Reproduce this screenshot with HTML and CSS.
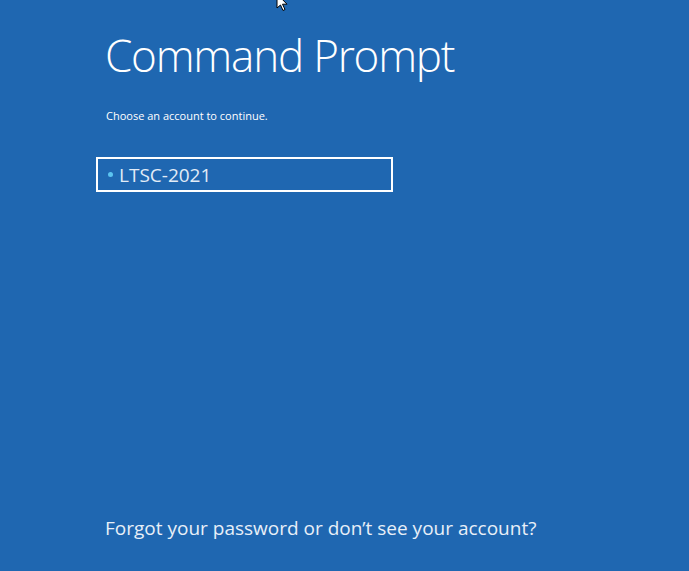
FILE: index.html
```html
<!DOCTYPE html>
<html lang="en">
<head>
  <meta charset="UTF-8">
  <title>Command Prompt</title>
  <link rel="stylesheet" href="styles.css">
</head>
<body>
  <div class="screen">
    <svg class="cursor" width="14" height="14" viewBox="0 0 14 14">
      <path d="M1 -6 L1 8 L4.5 5 L7 10.5 L9 9.5 L6.5 4.2 L11 4.2 Z" fill="#fff" stroke="#000" stroke-width="1"/>
    </svg>
    <div class="content">
      <h1 class="title">Command Prompt</h1>
      <p class="hint">Choose an account to continue.</p>
      <div class="account">
        <span class="dot"></span>
        <span class="name">LTSC-2021</span>
      </div>
    </div>
    <p class="forgot">Forgot your password or don’t see your account?</p>
  </div>
</body>
</html>
```
FILE: styles.css
```css
body {
  margin: 0;
  background: #1f67b1;
  color: #fff;
  font-family: 'Open Sans', sans-serif;
}
.screen {
  position: relative;
  height: 571px;
  display: flex;
  flex-direction: column;
  justify-content: space-between;
  padding: 0 0 0 105px;
  box-sizing: border-box;
  overflow: hidden;
}
.cursor {
  position: absolute;
  left: 276px;
  top: 0;
}
.title {
  margin: 27px 0 0 0;
  font-weight: 300;
  font-size: 44px;
  letter-spacing: -1.2px;
  line-height: 56px;
}
.hint {
  margin: 26px 0 0 1px;
  font-size: 11px;
  line-height: 14px;
}
.account {
  margin: 34px 0 0 -9px;
  width: 283px;
  height: 31px;
  border: 2px solid #fff;
  display: flex;
  align-items: center;
  gap: 6px;
  padding-left: 10px;
}
.dot {
  width: 5px;
  height: 5px;
  border-radius: 50%;
  background: #5cc4f0;
}
.name {
  font-size: 19px;
  color: #e2ecf7;
}
.forgot {
  margin: 0 0 30px 0;
  font-size: 19px;
  line-height: 26px;
  color: #e8eff8;
}
```
